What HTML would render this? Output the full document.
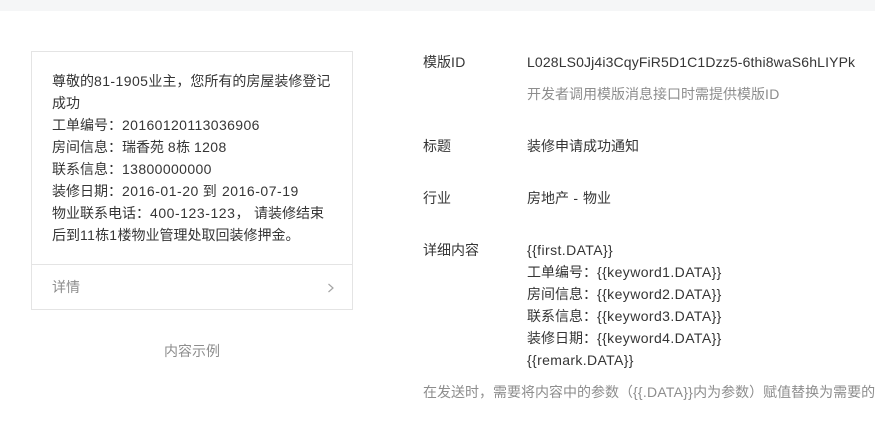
<!DOCTYPE html>
<html lang="zh"><head><meta charset="utf-8"><style>
html,body{margin:0;padding:0;width:875px;height:436px;overflow:hidden;background:#fff}
body{position:relative;font:14px/22px "Liberation Sans","Noto Sans CJK SC",sans-serif;color:#353535}
.t{position:absolute;white-space:nowrap}
.g{color:#8d8d8d}
.n{letter-spacing:.38px}
.d{letter-spacing:.52px}
.k{letter-spacing:.41px}
</style></head><body>
<div style="position:absolute;left:0;top:0;width:875px;height:11px;background:#f5f6f7"></div>
<div style="position:absolute;left:31px;top:51px;width:320px;height:257px;border:1px solid #e4e4e4"></div>
<div style="position:absolute;left:32px;top:264px;width:320px;height:1px;background:#e4e4e4"></div>
<div class="t" style="left:52px;top:70px">尊敬的<span class="d" style="letter-spacing:.43px">81-1905</span>业主，您所有的房屋装修登记</div>
<div class="t" style="left:52px;top:92px">成功</div>
<div class="t" style="left:52px;top:114px">工单编号：<span class="n">20160120113036906</span></div>
<div class="t" style="left:52px;top:136px">房间信息：瑞香苑 <span class="n">8</span>栋 <span class="n">1208</span></div>
<div class="t" style="left:52px;top:158px">联系信息：<span class="n">13800000000</span></div>
<div class="t" style="left:52px;top:180px">装修日期：<span class="d">2016-01-20</span> 到 <span class="d" style="margin-left:1.4px">2016-07-19</span></div>
<div class="t" style="left:52px;top:202px">物业联系电话：<span class="d" style="letter-spacing:.55px">400-123-123</span>， <span style="margin-left:.7px">请装修结束</span></div>
<div class="t" style="left:52px;top:224px">后到<span class="n">11</span>栋<span class="n">1</span>楼物业管理处取回装修押金。</div>
<div class="t g" style="left:52px;top:276px">详情</div>
<svg style="position:absolute;left:326px;top:283px" width="10" height="10" viewBox="0 0 10 10"><path d="M2.5 1 L7 5 L2.5 9" fill="none" stroke="#a5a5a5" stroke-width="1.2"/></svg>
<div class="t g" style="left:164px;top:340px">内容示例</div>
<div class="t" style="left:423px;top:51px">模版<span class="n">ID</span></div>
<div class="t" style="left:527px;top:51px;letter-spacing:.14px">L028LS0Jj4i3CqyFiR5D1C1Dzz5-6thi8waS6hLIYPk</div>
<div class="t g" style="left:527px;top:83px">开发者调用模版消息接口时需提供模版<span class="n">ID</span></div>
<div class="t" style="left:423px;top:135px">标题</div>
<div class="t" style="left:527px;top:135px">装修申请成功通知</div>
<div class="t" style="left:423px;top:187px">行业</div>
<div class="t" style="left:527px;top:187px">房地产<span style="letter-spacing:.5px"> - </span>物业</div>
<div class="t" style="left:423px;top:239px">详细内容</div>
<div class="t k" style="left:527px;top:239px">{{first.DATA}}</div>
<div class="t" style="left:527px;top:261px">工单编号：<span class="k">{{keyword1.DATA}}</span></div>
<div class="t" style="left:527px;top:283px">房间信息：<span class="k">{{keyword2.DATA}}</span></div>
<div class="t" style="left:527px;top:305px">联系信息：<span class="k">{{keyword3.DATA}}</span></div>
<div class="t" style="left:527px;top:327px">装修日期：<span class="k">{{keyword4.DATA}}</span></div>
<div class="t k" style="left:527px;top:349px;letter-spacing:.36px">{{remark.DATA}}</div>
<div class="t g" style="left:423px;top:381px">在发送时，需要将内容中的参数（<span style="letter-spacing:.25px">{{.DATA}}</span>内为参数）赋值替换为需要的信息</div>
</body></html>
